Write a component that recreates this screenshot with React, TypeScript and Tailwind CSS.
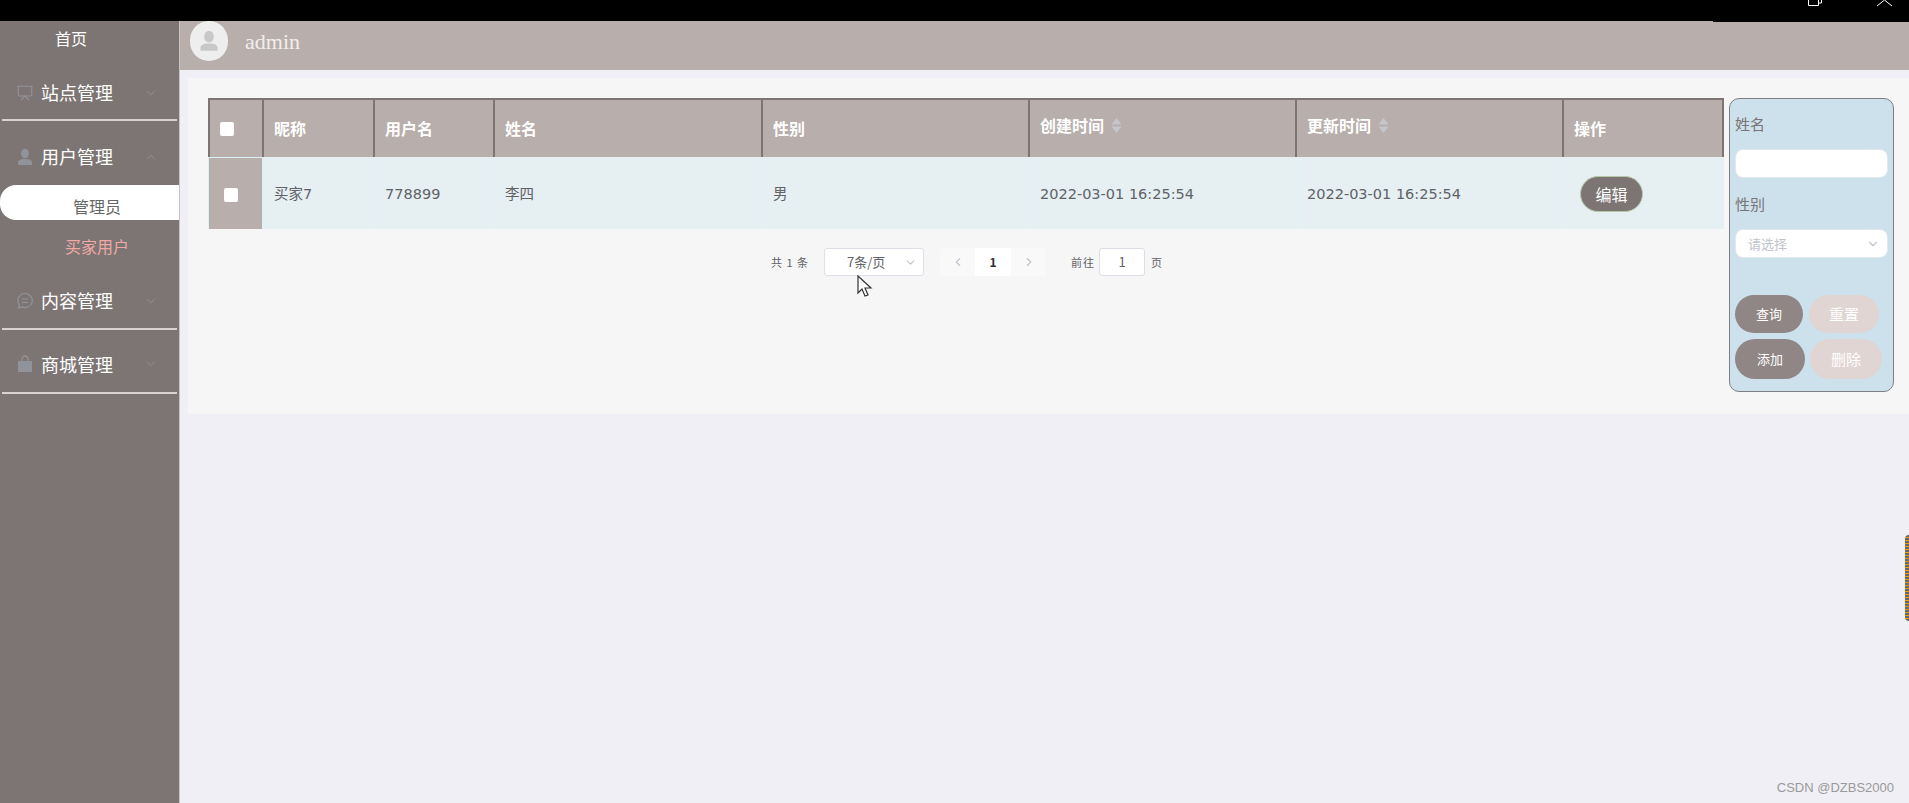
import React from "react";
import { ChevronDown, ChevronUp, ChevronLeft, ChevronRight, Presentation } from "lucide-react";

const CJK = '"Noto Sans CJK SC", sans-serif';
const CELL = '"DejaVu Sans", "Noto Sans CJK SC", sans-serif';

const COLUMNS = [
  { label: "昵称", width: "w-[111px]", value: "买家7" },
  { label: "用户名", width: "w-[120px]", value: "778899" },
  { label: "姓名", width: "w-[268px]", value: "李四" },
  { label: "性别", width: "w-[267px]", value: "男" },
  { label: "创建时间", width: "w-[267px]", value: "2022-03-01 16:25:54", sort: true },
  { label: "更新时间", width: "w-[267px]", value: "2022-03-01 16:25:54", sort: true },
];

function Check() {
  return <span className="block w-[14px] h-[14px] rounded-[2px] bg-white" />;
}

function SortCaret() {
  return (
    <svg width="11" height="17" viewBox="0 0 11 17" className="ml-[7px] mt-[2px] fill-[#c4c6cc]">
      <path d="M5.5 1l5 6.5H.5zM5.5 16L.5 9.5h10z" />
    </svg>
  );
}

function PersonIcon({ size, color }: { size: number; color: string }) {
  return (
    <svg width={size} height={size} viewBox="0 0 18 18" fill={color}>
      <ellipse cx="9" cy="5.5" rx="4" ry="4.8" />
      <path d="M2 17v-2.5c0-2.3 2.5-3.5 7-3.5s7 1.2 7 3.5V17z" />
    </svg>
  );
}

function ChatIcon() {
  return (
    <svg width="18" height="18" viewBox="0 0 18 18" fill="none" stroke="currentColor" strokeWidth="1.2">
      <path d="M9 1.5a7.5 7 0 1 1-3.2 13.4L2.5 16l.9-3.2A7 7 0 0 1 9 1.5z" />
      <path d="M6 7h6M6 10.5h6" />
    </svg>
  );
}

function BagIcon() {
  return (
    <svg width="18" height="18" viewBox="0 0 18 18" fill="currentColor">
      <path d="M2 6h14v11H2z" />
      <path d="M6 6V4a3 3 0 0 1 6 0v2" fill="none" stroke="currentColor" strokeWidth="1.3" />
    </svg>
  );
}

function MenuGroup({ icon, label, open, divider = true, box }: { icon: React.ReactNode; label: string; open?: boolean; divider?: boolean; box: string }) {
  return (
    <div className={`flex items-center mx-[2px] pl-[14px] pr-[17px] ${box} ${divider ? "border-b-2 border-[#d8d2d0]" : ""}`}>
      <span className="w-[25px] text-[#909399] flex">{icon}</span>
      <span className="text-[18px] text-white w-[103px]">{label}</span>
      {open ? <ChevronUp size={14} className="text-[#8a8584]" /> : <ChevronDown size={14} className="text-[#8a8584]" />}
    </div>
  );
}

function Sidebar() {
  return (
    <aside className="w-[180px] shrink-0 bg-[#7d7574] border-r border-[#c9c3c1]" style={{ fontFamily: CJK }}>
      <div className="h-[34px] pl-[55px] text-[16px] leading-[34px] text-white">首页</div>
      <MenuGroup box="h-[66px] pt-[11px]" icon={<Presentation size={18} strokeWidth={1.5} />} label="站点管理" />
      <MenuGroup box="h-[64px] pt-[7px]" icon={<PersonIcon size={18} color="currentColor" />} label="用户管理" open divider={false} />
      <div className="h-[35px] rounded-l-[16px] bg-white pl-[73px] text-[16px] leading-[42px] text-[#666]">管理员</div>
      <div className="h-[50px] pl-[65px] text-[16px] leading-[53px] text-[#f0a9a4]">买家用户</div>
      <MenuGroup box="h-[60px] pt-[3px]" icon={<ChatIcon />} label="内容管理" />
      <MenuGroup box="h-[64px] pt-[6px]" icon={<BagIcon />} label="商城管理" />
    </aside>
  );
}

function Pagination() {
  return (
    <div className="flex items-center h-[28px] mt-[19px] pl-[563px] text-[11px] text-[#606266]" style={{ fontFamily: CJK }}>
      <span className="w-[53px] tracking-[1px]">共 1 条</span>
      <div className="w-[100px] h-[28px] bg-white border border-[#dcdfe6] rounded-[3px] flex items-center pl-[22px] pr-[6px] text-[13px] justify-between">
        7条/页
        <ChevronDown size={13} className="text-[#c0c4cc]" />
      </div>
      <div className="ml-[16px] w-[35px] h-[28px] bg-[#f9f9f9] rounded-l-[3px] flex items-center justify-center text-[#c0c4cc]">
        <ChevronLeft size={14} />
      </div>
      <div className="w-[36px] h-[28px] bg-white flex items-center justify-center text-[12px] font-bold text-[#303133]">1</div>
      <div className="w-[35px] h-[28px] bg-[#f9f9f9] rounded-r-[3px] flex items-center justify-center text-[#c0c4cc]">
        <ChevronRight size={14} />
      </div>
      <span className="ml-[25px] tracking-[1px]">前往</span>
      <div className="ml-[4px] w-[46px] h-[28px] bg-white border border-[#dcdfe6] rounded-[3px] flex items-center justify-center text-[13px]">1</div>
      <span className="ml-[6px]">页</span>
    </div>
  );
}

function DataTable() {
  return (
    <div className="w-[1516px] shrink-0">
      <div className="flex h-[59px] bg-[#b8aeab] border-t-2 border-[#7d7574] text-white font-bold text-[16px]" style={{ fontFamily: CJK }}>
        <div className="w-[56px] flex items-center pl-[10px] border-l-2 border-r-2 border-[#7d7574]">
          <Check />
        </div>
        {COLUMNS.map((c) => (
          <div key={c.label} className={`${c.width} flex items-center border-r-2 border-[#7d7574] pl-[10px] ${c.sort ? "pb-[8px]" : "pb-[2px]"}`}>
            {c.label}
            {c.sort && <SortCaret />}
          </div>
        ))}
        <div className="flex-1 flex items-center pl-[10px] pb-[2px] border-r-2 border-[#7d7574]">操作</div>
      </div>
      <div className="flex h-[72px] bg-[#e6f0f3] text-[14.5px] text-[#606266]" style={{ fontFamily: CELL }}>
        <div className="w-[55px] mr-[1px] flex items-center pl-[15px] pt-[2px] bg-[#b8aeab] border-t border-l border-r border-[#d9f0f7]">
          <Check />
        </div>
        {COLUMNS.map((c) => (
          <div key={c.label} className={`${c.width} flex items-center pl-[10px] pt-[3px] border-r border-[#e0f3f9]`}>
            {c.value}
          </div>
        ))}
        <div className="flex-1 flex items-center pl-[16px] pt-[1px]">
          <span className="w-[63px] h-[36px] rounded-full bg-[#7d7574] border border-[#b5c9a6] text-white text-[16px] flex items-center justify-center" style={{ fontFamily: CJK }}>
            编辑
          </span>
        </div>
      </div>
      <Pagination />
    </div>
  );
}

function FilterPanel() {
  return (
    <div className="ml-[5px] w-[165px] h-[294px] shrink-0 rounded-[10px] border border-[#7d7f82] bg-[#cce1ec] px-[5px] text-[#7a7474]" style={{ fontFamily: CJK }}>
      <div className="text-[15px] mt-[13px] leading-[24px]">姓名</div>
      <div className="h-[29px] mt-[13px] rounded-[8px] bg-white border border-[#e4e7ed]" />
      <div className="text-[15px] mt-[14px] leading-[24px]">性别</div>
      <div className="h-[29px] mt-[13px] rounded-[8px] bg-white border border-[#e4e7ed] flex items-center justify-between pl-[12px] pr-[7px] text-[13px] text-[#c0c4cc]">
        请选择
        <ChevronDown size={14} />
      </div>
      <div className="flex gap-[6px] mt-[37px] text-white">
        <span className="w-[68px] h-[38px] rounded-full bg-[#8f8685] text-[13px] flex items-center justify-center">查询</span>
        <span className="w-[70px] h-[38px] rounded-full bg-[#e0d5d3] text-[15px] flex items-center justify-center">重置</span>
      </div>
      <div className="flex gap-[5px] mt-[6px] text-white">
        <span className="w-[70px] h-[40px] rounded-full bg-[#8f8685] text-[13px] flex items-center justify-center">添加</span>
        <span className="w-[72px] h-[40px] rounded-full bg-[#e0d5d3] text-[15px] flex items-center justify-center">删除</span>
      </div>
    </div>
  );
}

export default function App() {
  return (
    <div className="relative flex flex-col h-screen overflow-hidden bg-[#efeff5]">
      <div className="h-[21px] shrink-0 bg-black" />
      <div className="flex flex-1 min-h-0">
        <Sidebar />
        <main className="flex-1 min-w-0">
          <header className="flex items-center h-[49px] bg-[#b8aeab] pl-[10px]">
            <span className="w-[38px] h-[40px] -mt-[9px] rounded-full bg-[#eeeeee] flex items-center justify-center">
              <PersonIcon size={22} color="#c8c8c8" />
            </span>
            <span className="ml-[17px] -mt-[8px] text-[22px] text-[#f2eeec]" style={{ fontFamily: '"Liberation Serif", serif' }}>admin</span>
          </header>
          <div className="flex h-[336px] mt-[8px] ml-[8px] bg-[#f6f6f6] pl-[20px] pt-[20px]">
            <DataTable />
            <FilterPanel />
          </div>
        </main>
      </div>

      {/* window chrome and overlays from the capture */}
      <div className="absolute left-[1713px] right-0 top-[21px] h-px bg-black" />
      <svg width="86" height="8" viewBox="0 0 86 8" className="absolute top-0 left-[1807px] stroke-white fill-none">
        <path d="M1.5 0v5.5h10V0M11.5 3h3V0" />
        <path d="M70 6l7.5-6L85 6" />
      </svg>
      <svg width="16" height="24" viewBox="0 0 16 24" className="absolute left-[857px] top-[275px]">
        <path d="M1 1v17l4-4 3 7 3-1-3-7h6z" fill="#fff" stroke="#333" strokeWidth="1.2" />
      </svg>
      <div className="absolute left-[1905px] top-[535px] w-[6px] h-[86px] rounded-l-[4px] bg-[repeating-linear-gradient(180deg,#666_0px,#666_2px,#f59a00_2px,#f59a00_3px)]" />
      <span className="absolute right-[15px] bottom-[6px] text-[13px] text-[#9a9a9a]" style={{ fontFamily: '"Liberation Sans", sans-serif' }}>CSDN @DZBS2000</span>
    </div>
  );
}
